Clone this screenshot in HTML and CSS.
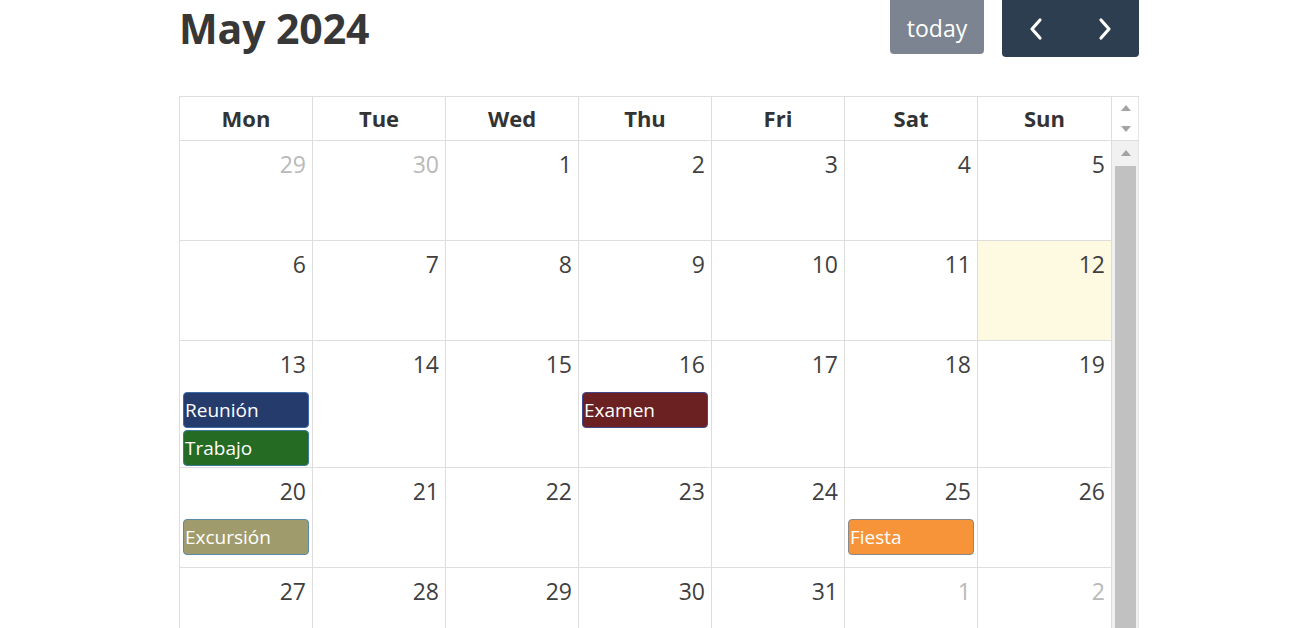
FILE: index.html
```html
<!DOCTYPE html>
<html>
<head>
<meta charset="utf-8">
<link rel="stylesheet" href="styles.css">
</head>
<body>
<div class="cal">
  <div class="toolbar">
    <h2 class="title">May 2024</h2>
    <div class="actions">
      <button class="btn today">today</button>
      <div class="nav">
        <button class="btn navbtn"><svg width="16" height="24" viewBox="0 0 16 24"><path d="M12 3 L4 12 L12 21" fill="none" stroke="#fff" stroke-width="3.2" stroke-linecap="round" stroke-linejoin="round"/></svg></button>
        <button class="btn navbtn"><svg width="16" height="24" viewBox="0 0 16 24"><path d="M4 3 L12 12 L4 21" fill="none" stroke="#fff" stroke-width="3.2" stroke-linecap="round" stroke-linejoin="round"/></svg></button>
      </div>
    </div>
  </div>
  <div class="grid">
    <div class="head">
      <div class="hrow">
        <div class="hcell">Mon</div><div class="hcell">Tue</div><div class="hcell">Wed</div><div class="hcell">Thu</div><div class="hcell">Fri</div><div class="hcell">Sat</div><div class="hcell">Sun</div>
      </div>
      <div class="hscroll"><span class="arr up"></span><span class="arr down"></span></div>
    </div>
    <div class="bodywrap">
      <div class="weeks">
        <div class="week">
          <div class="day"><span class="num other">29</span></div>
          <div class="day"><span class="num other">30</span></div>
          <div class="day"><span class="num">1</span></div>
          <div class="day"><span class="num">2</span></div>
          <div class="day"><span class="num">3</span></div>
          <div class="day"><span class="num">4</span></div>
          <div class="day"><span class="num">5</span></div>
        </div>
        <div class="week">
          <div class="day"><span class="num">6</span></div>
          <div class="day"><span class="num">7</span></div>
          <div class="day"><span class="num">8</span></div>
          <div class="day"><span class="num">9</span></div>
          <div class="day"><span class="num">10</span></div>
          <div class="day"><span class="num">11</span></div>
          <div class="day todaycell"><span class="num">12</span></div>
        </div>
        <div class="week">
          <div class="day"><span class="num">13</span><div class="ev ev-reunion">Reunión</div><div class="ev ev-trabajo">Trabajo</div></div>
          <div class="day"><span class="num">14</span></div>
          <div class="day"><span class="num">15</span></div>
          <div class="day"><span class="num">16</span><div class="ev ev-examen">Examen</div></div>
          <div class="day"><span class="num">17</span></div>
          <div class="day"><span class="num">18</span></div>
          <div class="day"><span class="num">19</span></div>
        </div>
        <div class="week">
          <div class="day"><span class="num">20</span><div class="ev ev-excursion">Excursión</div></div>
          <div class="day"><span class="num">21</span></div>
          <div class="day"><span class="num">22</span></div>
          <div class="day"><span class="num">23</span></div>
          <div class="day"><span class="num">24</span></div>
          <div class="day"><span class="num">25</span><div class="ev ev-fiesta">Fiesta</div></div>
          <div class="day"><span class="num">26</span></div>
        </div>
        <div class="week">
          <div class="day"><span class="num">27</span></div>
          <div class="day"><span class="num">28</span></div>
          <div class="day"><span class="num">29</span></div>
          <div class="day"><span class="num">30</span></div>
          <div class="day"><span class="num">31</span></div>
          <div class="day"><span class="num other">1</span></div>
          <div class="day"><span class="num other">2</span></div>
        </div>
      </div>
      <div class="vscroll"><span class="arr up small"></span><div class="thumb"></div></div>
    </div>
  </div>
</div>
</body>
</html>
```

FILE: styles.css
```css
html, body {
  margin: 0;
  padding: 0;
  background: #fff;
  overflow: hidden;
}
body {
  font-family: "Open Sans", "Noto Sans", sans-serif;
  color: #3a3a3a;
}
.cal {
  width: 960px;
  margin-left: 179px;
}
.toolbar {
  display: flex;
  justify-content: space-between;
  align-items: flex-start;
  height: 96px;
}
.title {
  margin: 0;
  font-size: 41px;
  font-weight: 700;
  line-height: 56px;
  color: #373737;
  letter-spacing: -0.1px;
}
.actions {
  display: flex;
  gap: 18px;
  margin-top: -4px;
}
.btn {
  border: none;
  color: #fff;
  font-family: inherit;
  cursor: pointer;
}
.today {
  background: #7b8490;
  width: 94px;
  height: 58px;
  border-radius: 4px;
  font-size: 23px;
  padding: 6px 0 0 0;
  line-height: 1;
}
.nav {
  display: flex;
  background: #2c3e50;
  border-radius: 4px;
  width: 137px;
  height: 61px;
  overflow: hidden;
}
.navbtn {
  flex: 1;
  background: transparent;
  display: flex;
  align-items: center;
  justify-content: center;
  padding: 4px 0 0 0;
}
.grid {
  border: 1px solid #dddddd;
  border-right: none;
  width: 959px;
}
.head {
  display: flex;
  height: 43px;
  border-bottom: 1px solid #dddddd;
}
.hrow, .week {
  display: grid;
  grid-template-columns: repeat(6, 133px) 134px;
}
.hrow {
  width: 932px;
}
.hcell {
  border-right: 1px solid #dddddd;
  text-align: center;
  font-weight: 700;
  font-size: 22px;
  line-height: 42px;
  color: #333;
}
.hscroll {
  flex: 1;
  position: relative;
  border-right: 1px solid #e4e4e4;
}
.arr {
  position: absolute;
  left: 9px;
  width: 0;
  height: 0;
  border-left: 5px solid transparent;
  border-right: 5px solid transparent;
}
.arr.up {
  top: 8px;
  border-bottom: 6px solid #a3a3a3;
}
.arr.down {
  top: 29px;
  border-top: 6px solid #a3a3a3;
}
.bodywrap {
  display: flex;
}
.weeks {
  width: 932px;
}
.week {
  min-height: 99px;
  border-bottom: 1px solid #dddddd;
}
.day {
  border-right: 1px solid #dddddd;
  display: flex;
  flex-direction: column;
  align-items: stretch;
  padding: 0 3px 1px 3px;
}
.todaycell {
  background: #fef9e1;
}
.num {
  align-self: flex-end;
  font-size: 23px;
  line-height: 30px;
  padding: 8px 3px 13px 0;
  color: #3f3f3f;
}
.num.other {
  color: #b9b9b9;
}
.ev {
  height: 34px;
  border: 1px solid #3a87d6;
  border-radius: 4px;
  color: #fff;
  font-size: 19px;
  line-height: 34px;
  padding-left: 1px;
  white-space: nowrap;
  overflow: hidden;
}
.ev + .ev {
  margin-top: 2px;
}
.ev-reunion { background: #243b6b; border-color: #3d6aa8; }
.ev-trabajo { background: #256b24; border-color: #3a7a9a; }
.ev-examen { background: #6b2122; border-color: #44488a; }
.ev-excursion { background: #a09b6c; border-color: #5b8aa6; }
.ev-fiesta { background: #f7943a; border-color: #888888; }
.vscroll {
  flex: 1;
  position: relative;
  background: #f1f1f1;
  border-right: 1px solid #e4e4e4;
}
.vscroll .arr.up.small {
  top: 9px;
  left: 9px;
  border-bottom: 6px solid #a3a3a3;
}
.thumb {
  position: absolute;
  top: 25px;
  left: 3px;
  right: 2px;
  bottom: 0;
  background: #c1c1c1;
}
```
